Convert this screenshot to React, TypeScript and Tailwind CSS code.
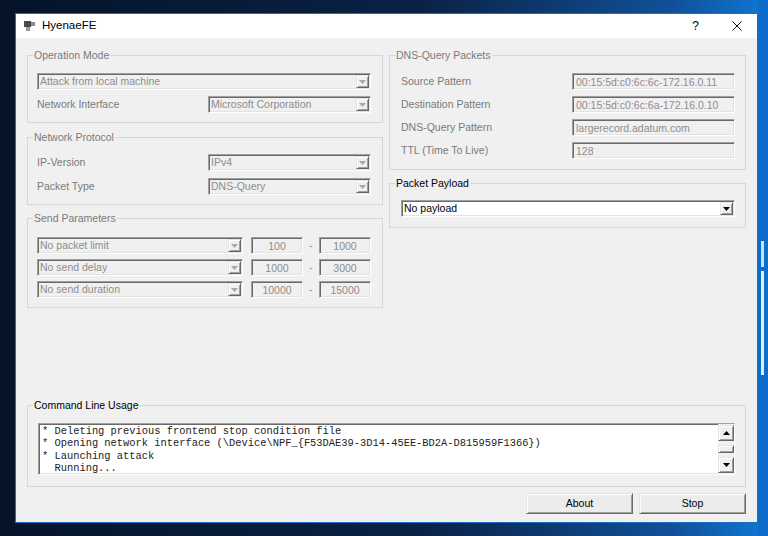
import React from 'react';

const sunken =
  'border border-t-[#a0a0a0] border-l-[#a0a0a0] border-r-white border-b-white shadow-[inset_1px_1px_0_#696969,inset_-1px_-1px_0_#e3e3e3]';
const raised =
  'border border-t-[#e3e3e3] border-l-[#e3e3e3] border-r-[#696969] border-b-[#696969] shadow-[inset_1px_1px_0_#ffffff,inset_-1px_-1px_0_#a0a0a0]';

const Tri: React.FC<{ up?: boolean; color: string }> = ({ up, color }) => (
  <svg width="7" height="4" viewBox="0 0 7 4">
    <path d={up ? 'M0 4 L3.5 0 L7 4 Z' : 'M0 0 L7 0 L3.5 4 Z'} fill={color} />
  </svg>
);

const Combo: React.FC<{ text: string; enabled?: boolean; className?: string }> = ({ text, enabled, className = '' }) => (
  <div
    className={`flex h-[17px] p-[1px] ${sunken} ${enabled ? 'bg-white text-black' : 'bg-[#f0f0f0] text-[#8d8d8d]'} ${className}`}
  >
    <span className="flex-1 truncate pl-[1px] leading-[13px]">{text}</span>
    <span className={`flex w-[13px] items-center justify-center bg-[#f0f0f0] ${raised}`}>
      <Tri color={enabled ? '#000' : '#a8a8a8'} />
    </span>
  </div>
);

const Edit: React.FC<{ text: string; center?: boolean; className?: string }> = ({ text, center, className = '' }) => (
  <div
    className={`h-[17px] bg-[#f0f0f0] px-[3px] leading-[16px] text-[#8d8d8d] ${center ? 'text-center' : ''} ${sunken} ${className}`}
  >
    {text}
  </div>
);

const Group: React.FC<{ title: string; enabled?: boolean; className?: string; children?: React.ReactNode }> = ({
  title,
  enabled,
  className = '',
  children,
}) => (
  <div className={`relative border border-[#d6d6d6] ${className}`}>
    <span
      className={`absolute -top-[7px] left-[5px] bg-[#f0f0f0] px-[1px] leading-[12px] ${enabled ? 'text-black' : 'text-[#7a7a7a]'}`}
    >
      {title}
    </span>
    {children}
  </div>
);

const Row: React.FC<{ label: string; children: React.ReactNode }> = ({ label, children }) => (
  <div className="flex h-[17px] items-center">
    <span className="flex-1 text-[#7a7a7a]">{label}</span>
    {children}
  </div>
);

const SendRow: React.FC<{ text: string; a: string; b: string }> = ({ text, a, b }) => (
  <div className="flex h-[17px] items-center">
    <Combo text={text} className="w-[206px]" />
    <Edit text={a} center className="ml-[8px] w-[52px]" />
    <span className="w-[16px] text-center text-[#8d8d8d]">-</span>
    <Edit text={b} center className="w-[52px]" />
  </div>
);

const log = [
  '* Deleting previous frontend stop condition file',
  '* Opening network interface (\\Device\\NPF_{F53DAE39-3D14-45EE-BD2A-D815959F1366})',
  '* Launching attack',
  '  Running...',
];

export default function App() {
  return (
    <div className="flex h-[536px] w-[768px] overflow-hidden bg-[linear-gradient(90deg,#051329_0%,#0a2246_55%,#11519a_88%,#0f78d6_100%)] pl-[15px] pt-[13px] font-['Liberation_Sans',Arial,sans-serif] text-[10.5px]">
      <div className="flex h-[510px] w-[743px] shrink-0 flex-col border border-[#1c6fc0] bg-[#f0f0f0]">
        {/* title bar */}
        <div className="flex h-[24px] items-center bg-white pl-[8px]">
          <svg width="12" height="11" viewBox="0 0 12 11">
            <rect x="0" y="0" width="7" height="6" fill="#4a4a4a" />
            <rect x="7" y="1" width="4" height="4" fill="#8a8a8a" />
            <rect x="2" y="6" width="4" height="4" fill="#9a9a9a" />
          </svg>
          <span className="ml-[6px] text-[11.5px] text-black">HyenaeFE</span>
          <span className="ml-auto mr-[33px] text-[12px] text-black">?</span>
          <svg width="10" height="10" viewBox="0 0 10 10" className="mr-[15px]">
            <path d="M0.5 0.5 L9.5 9.5 M9.5 0.5 L0.5 9.5" stroke="#111" strokeWidth="1" />
          </svg>
        </div>

        {/* client */}
        <div className="flex flex-1 flex-col px-[11px] pb-[8px] pt-[17px]">
          <div className="flex gap-[6px]">
            <div className="flex w-[356px] flex-col">
              <Group title="Operation Mode" className="flex h-[68px] flex-col gap-[6px] pl-[9px] pr-[11px] pt-[17px]">
                <Combo text="Attack from local machine" />
                <Row label="Network Interface">
                  <Combo text="Microsoft Corporation" className="w-[163px]" />
                </Row>
              </Group>
              <Group title="Network Protocol" className="mt-[14px] flex h-[68px] flex-col gap-[7px] pl-[9px] pr-[11px] pt-[16px]">
                <Row label="IP-Version">
                  <Combo text="IPv4" className="w-[163px]" />
                </Row>
                <Row label="Packet Type">
                  <Combo text="DNS-Query" className="w-[163px]" />
                </Row>
              </Group>
              <Group title="Send Parameters" className="mt-[13px] flex h-[90px] flex-col gap-[5px] pl-[9px] pr-[11px] pt-[18px]">
                <SendRow text="No packet limit" a="100" b="1000" />
                <SendRow text="No send delay" a="1000" b="3000" />
                <SendRow text="No send duration" a="10000" b="15000" />
              </Group>
            </div>

            <div className="flex w-[357px] flex-col">
              <Group title="DNS-Query Packets" className="flex h-[115px] flex-col gap-[6px] pl-[11px] pr-[10px] pt-[17px]">
                <Row label="Source Pattern">
                  <Edit text="00:15:5d:c0:6c:6c-172.16.0.11" className="w-[163px]" />
                </Row>
                <Row label="Destination Pattern">
                  <Edit text="00:15:5d:c0:6c:6a-172.16.0.10" className="w-[163px]" />
                </Row>
                <Row label="DNS-Query Pattern">
                  <Edit text="largerecord.adatum.com" className="w-[163px]" />
                </Row>
                <Row label="TTL (Time To Live)">
                  <Edit text="128" className="w-[163px]" />
                </Row>
              </Group>
              <Group title="Packet Payload" enabled className="mt-[13px] h-[45px] pl-[11px] pr-[10px] pt-[16px]">
                <Combo text="No payload" enabled />
              </Group>
            </div>
          </div>

          <div className="flex-1" />

          <Group title="Command Line Usage" enabled className="h-[82px] px-[10px] pt-[17px]">
            <div className={`flex h-[52px] bg-white ${sunken}`}>
              <div className="flex-1 overflow-hidden whitespace-pre pl-[3px] pt-[1px] font-['Liberation_Mono','Courier_New',monospace] text-[10.4px] leading-[12.4px] text-[#222]">
                {log.map((l) => (
                  <div key={l}>{l}</div>
                ))}
              </div>
              <div className="flex w-[16px] flex-col bg-[#f0f0f0] py-[1px]">
                <div className={`flex h-[16px] items-center justify-center ${raised}`}>
                  <Tri up color="#000" />
                </div>
                <div className="flex flex-1 flex-col justify-center">
                  <div className={`h-[8px] ${raised}`} />
                </div>
                <div className={`flex h-[16px] items-center justify-center ${raised}`}>
                  <Tri color="#000" />
                </div>
              </div>
            </div>
          </Group>

          <div className="mt-[6px] flex h-[21px] justify-end gap-[6px]">
            <button className={`w-[107px] bg-[#ececec] text-black ${raised}`}>About</button>
            <button className={`w-[107px] bg-[#ececec] text-black ${raised}`}>Stop</button>
          </div>
        </div>
      </div>

      <div className="-mt-[13px] flex h-[536px] flex-1 flex-col bg-[#0e6ccb]">
        <div className="h-[241px]" />
        <div className="ml-[3px] h-[26px] w-[3px] bg-[#bfe6ff]" />
        <div className="h-[4px]" />
        <div className="ml-[3px] h-[104px] w-[3px] bg-[#d8f1ff]" />
      </div>
    </div>
  );
}
